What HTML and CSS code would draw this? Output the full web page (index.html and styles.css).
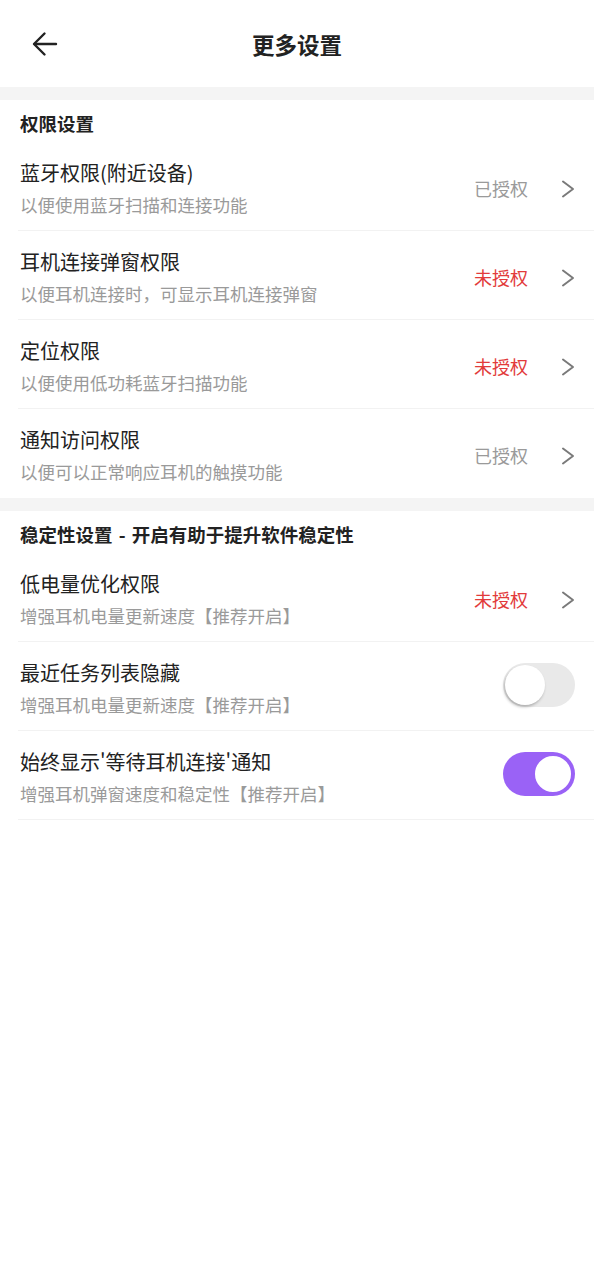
FILE: index.html
```html
<!DOCTYPE html>
<html lang="zh-CN">

<head>
	<meta charset="UTF-8">
	<meta name="viewport" content="width=device-width, initial-scale=1.0">
	<title>更多设置</title>
	<link rel="stylesheet" href="styles.css">
</head>

<body>
	<div class="topbar">
		<button class="back" aria-label="返回">
			<svg width="26" height="26" viewBox="0 0 26 26" fill="none" stroke="#222" stroke-width="2.4" stroke-linecap="round" stroke-linejoin="round">
				<path d="M24 13H2.5" />
				<path d="M12.5 2.5L2 13l10.5 10.5" />
			</svg>
		</button>
		<h1>更多设置</h1>
	</div>

	<div class="gap"></div>

	<div class="section">
		<p class="section-title">权限设置</p>
		<div class="row">
			<div class="text">
				<div class="name">蓝牙权限(附近设备)</div>
				<div class="desc">以便使用蓝牙扫描和连接功能</div>
			</div>
			<span class="status">已授权</span>
			<svg class="chevron" width="14" height="18" viewBox="0 0 14 18" fill="none" stroke="#7a7a7a" stroke-width="2" stroke-linecap="round" stroke-linejoin="round"><path d="M2 1.5L12 9 2 16.5" /></svg>
		</div>
		<div class="row">
			<div class="text">
				<div class="name">耳机连接弹窗权限</div>
				<div class="desc">以便耳机连接时，可显示耳机连接弹窗</div>
			</div>
			<span class="status denied">未授权</span>
			<svg class="chevron" width="14" height="18" viewBox="0 0 14 18" fill="none" stroke="#7a7a7a" stroke-width="2" stroke-linecap="round" stroke-linejoin="round"><path d="M2 1.5L12 9 2 16.5" /></svg>
		</div>
		<div class="row">
			<div class="text">
				<div class="name">定位权限</div>
				<div class="desc">以便使用低功耗蓝牙扫描功能</div>
			</div>
			<span class="status denied">未授权</span>
			<svg class="chevron" width="14" height="18" viewBox="0 0 14 18" fill="none" stroke="#7a7a7a" stroke-width="2" stroke-linecap="round" stroke-linejoin="round"><path d="M2 1.5L12 9 2 16.5" /></svg>
		</div>
		<div class="row last">
			<div class="text">
				<div class="name">通知访问权限</div>
				<div class="desc">以便可以正常响应耳机的触摸功能</div>
			</div>
			<span class="status">已授权</span>
			<svg class="chevron" width="14" height="18" viewBox="0 0 14 18" fill="none" stroke="#7a7a7a" stroke-width="2" stroke-linecap="round" stroke-linejoin="round"><path d="M2 1.5L12 9 2 16.5" /></svg>
		</div>
	</div>

	<div class="gap"></div>

	<div class="section">
		<p class="section-title">稳定性设置 - 开启有助于提升软件稳定性</p>
		<div class="row">
			<div class="text">
				<div class="name">低电量优化权限</div>
				<div class="desc">增强耳机电量更新速度【推荐开启】</div>
			</div>
			<span class="status denied">未授权</span>
			<svg class="chevron" width="14" height="18" viewBox="0 0 14 18" fill="none" stroke="#7a7a7a" stroke-width="2" stroke-linecap="round" stroke-linejoin="round"><path d="M2 1.5L12 9 2 16.5" /></svg>
		</div>
		<div class="row">
			<div class="text">
				<div class="name">最近任务列表隐藏</div>
				<div class="desc">增强耳机电量更新速度【推荐开启】</div>
			</div>
			<span class="switch"><span class="knob"></span></span>
		</div>
		<div class="row">
			<div class="text">
				<div class="name">始终显示'等待耳机连接'通知</div>
				<div class="desc">增强耳机弹窗速度和稳定性【推荐开启】</div>
			</div>
			<span class="switch on"><span class="knob"></span></span>
		</div>
	</div>
</body>

</html>
```

FILE: styles.css
```css
body {
	margin: 0;
	background: #fff;
	font-family: "Noto Sans CJK SC", "Noto Sans", sans-serif;
	color: #222;
}

.topbar {
	height: 87px;
	display: flex;
	align-items: center;
	justify-content: center;
	position: relative;
}

.topbar h1 {
	margin: 0;
	font-size: 22.5px;
	font-weight: bold;
	color: #222;
}

.back {
	position: absolute;
	left: 32px;
	top: 31px;
	padding: 0;
	border: none;
	background: none;
	display: flex;
	cursor: pointer;
}

.gap {
	height: 13px;
	background: #f4f4f4;
}

.section-title {
	margin: 0;
	padding: 11px 20px 7px;
	height: 24px;
	line-height: 24px;
	font-size: 18.5px;
	font-weight: bold;
	word-spacing: 2px;
	color: #222;
}

.row {
	display: flex;
	align-items: center;
	margin-left: 18px;
	padding: 17px 19px 13px 2px;
	border-bottom: 1px solid #f2f2f2;
}

.row.last {
	border-bottom: none;
	padding-bottom: 14px;
}

.text {
	flex: 1;
}

.name {
	font-size: 20px;
	line-height: 28px;
	color: #222;
}

.desc {
	margin-top: 6px;
	font-size: 17.5px;
	line-height: 24px;
	color: #9a9a9a;
}

.status {
	font-size: 18px;
	color: #9a9a9a;
	margin-right: 33px;
}

.status.denied {
	color: #e23b3b;
}

.chevron {
	margin-top: 1px;
}

.switch {
	width: 72px;
	height: 44px;
	margin-top: -6px;
	border-radius: 22px;
	background: #e9e9e9;
	display: flex;
	align-items: center;
	padding: 2px;
	box-sizing: border-box;
}

.knob {
	width: 40px;
	height: 40px;
	border-radius: 50%;
	background: #fff;
	box-sizing: border-box;
	box-shadow: -1px 2px 3px rgba(0, 0, 0, 0.25);
}

.switch.on {
	background: #9a62f6;
	justify-content: flex-end;
}

.switch.on .knob {
	border: 2px solid #9a62f6;
	box-shadow: none;
}
```
